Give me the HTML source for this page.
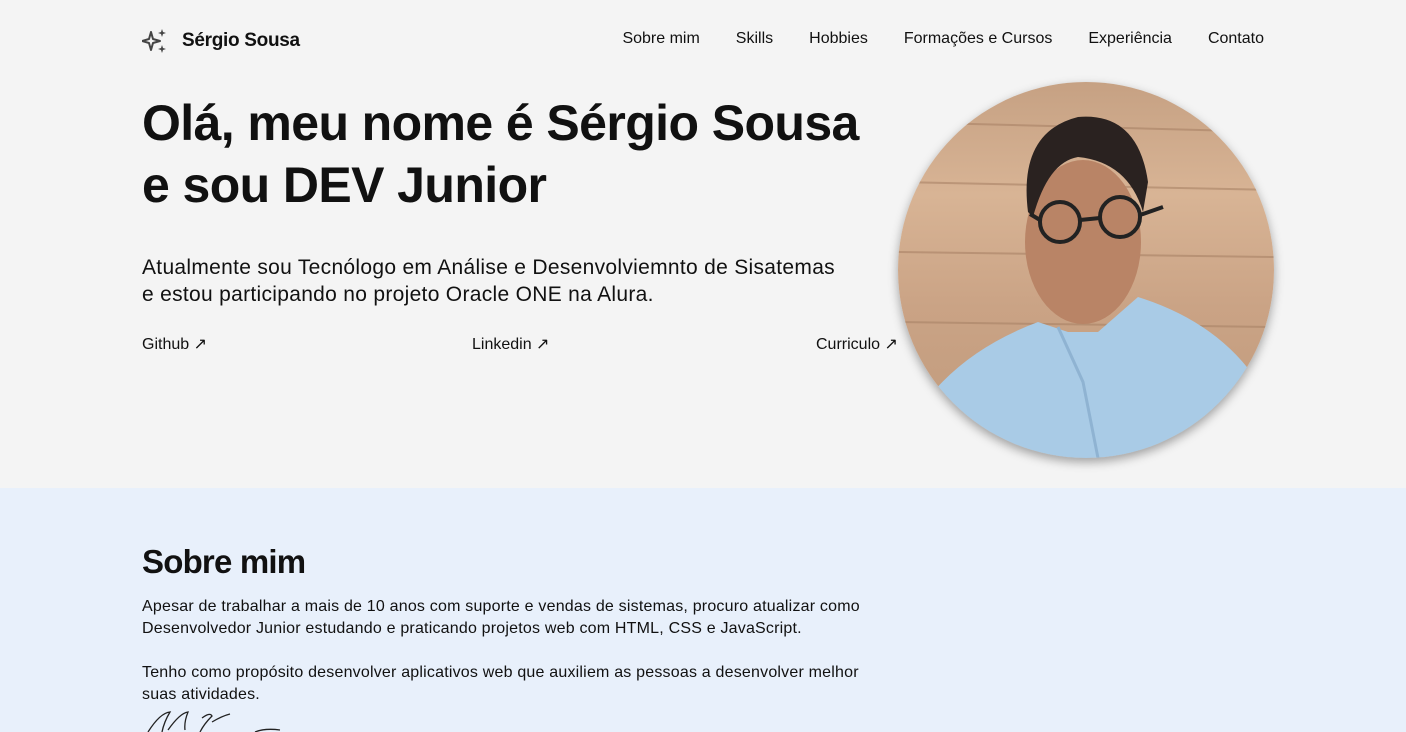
<!DOCTYPE html>
<html><head><meta charset="utf-8"><style>
*{margin:0;padding:0;box-sizing:border-box}
body{width:1406px;height:732px;overflow:hidden;background:#f4f4f4;font-family:"Liberation Sans",sans-serif;color:#111}
.nav{position:absolute;top:27px;left:142px;right:142px;height:26px}
.logo{position:absolute;left:0;top:1px;display:flex;align-items:center;font-weight:bold;font-size:19px;letter-spacing:-0.3px}
.logo svg{margin-right:14px}
.menu{position:absolute;right:0;top:3px;font-size:16px;display:flex;gap:36px}
h1{position:absolute;left:142px;top:92px;font-size:50px;line-height:62px;font-weight:bold;letter-spacing:-0.6px;width:800px;white-space:nowrap}
.lead{position:absolute;left:142px;top:254px;font-size:21px;line-height:27px;width:800px;letter-spacing:0.3px;white-space:nowrap}
.l{position:absolute;top:334px;font-size:16px}
.photo{position:absolute;left:898px;top:82px;width:376px;height:376px;border-radius:50%;overflow:hidden;box-shadow:0 4px 10px rgba(0,0,0,.35);background:linear-gradient(180deg,#c6a183 0%,#d8b495 30%,#caa385 60%,#bf9a7c 100%)}
.sec{position:absolute;left:0;top:488px;width:1406px;height:244px;background:#e8f0fb}
h2{position:absolute;left:142px;top:543px;font-size:33px;font-weight:bold;letter-spacing:-0.8px}
.p{position:absolute;left:142px;font-size:16px;line-height:22px;width:800px;letter-spacing:0.2px;white-space:nowrap}
</style></head><body>
<div class="nav">
<div class="logo"><svg width="26" height="26" viewBox="0 0 26 26" fill="#444"><path d="M9 4 L11 11 L18 13 L11 15 L9 22 L7 15 L0 13 L7 11Z" fill="none" stroke="#444" stroke-width="2" stroke-linejoin="round"/><path d="M20 1 L21 4 L24 5 L21 6 L20 9 L19 6 L16 5 L19 4Z"/><path d="M20 17 L21 20 L24 21 L21 22 L20 25 L19 22 L16 21 L19 20Z"/></svg>Sérgio Sousa</div>
<div class="menu"><span>Sobre mim</span><span>Skills</span><span>Hobbies</span><span>Formações e Cursos</span><span>Experiência</span><span>Contato</span></div>
</div>
<h1>Olá, meu nome é Sérgio Sousa<br>e sou DEV Junior</h1>
<div class="lead">Atualmente sou Tecnólogo em Análise e Desenvolviemnto de Sisatemas<br>e estou participando no projeto Oracle ONE na Alura.</div>
<div class="l" style="left:142px">Github ↗</div>
<div class="l" style="left:472px">Linkedin ↗</div>
<div class="l" style="left:816px">Curriculo ↗</div>
<div class="photo"><svg width="376" height="376" viewBox="0 0 376 376">
<g stroke="#a88266" stroke-width="2" opacity=".6"><line x1="0" y1="40" x2="376" y2="50"/><line x1="0" y1="100" x2="376" y2="108"/><line x1="0" y1="170" x2="376" y2="175"/><line x1="0" y1="240" x2="376" y2="245"/></g>
<path d="M20 330 Q60 270 140 240 L170 250 L200 250 L240 215 Q320 240 360 300 L376 376 L0 376Z" fill="#a9cbe6"/>
<path d="M160 245 L185 300 L200 376" stroke="#8fb3d2" stroke-width="3" fill="none"/>
<ellipse cx="185" cy="160" rx="58" ry="82" fill="#b98466"/>
<path d="M130 130 Q120 50 180 35 Q240 30 250 100 L245 130 Q230 80 180 75 Q150 80 135 135Z" fill="#2a2220"/>
<g fill="none" stroke="#222" stroke-width="4"><circle cx="162" cy="140" r="20"/><circle cx="222" cy="135" r="20"/><path d="M182 138 L202 136 M142 138 L132 132 M242 133 L265 125"/></g>
</svg></div>
<div class="sec"></div>
<h2>Sobre mim</h2>
<div class="p" style="top:596px">Apesar de trabalhar a mais de 10 anos com suporte e vendas de sistemas, procuro atualizar como<br>Desenvolvedor Junior estudando e praticando projetos web com HTML, CSS e JavaScript.</div>
<div class="p" style="top:662px">Tenho como propósito desenvolver aplicativos web que auxiliem as pessoas a desenvolver melhor<br>suas atividades.</div>
<svg style="position:absolute;left:140px;top:708px" width="150" height="24"><path d="M8 24 Q20 5 30 4 Q24 14 22 24 M28 22 Q40 5 48 4 Q44 14 45 22 M62 10 Q70 4 72 8 Q64 16 60 24 M72 14 Q82 8 90 6 M115 24 Q125 20 140 22" stroke="#222" stroke-width="1.3" fill="none"/></svg>
</body></html>
